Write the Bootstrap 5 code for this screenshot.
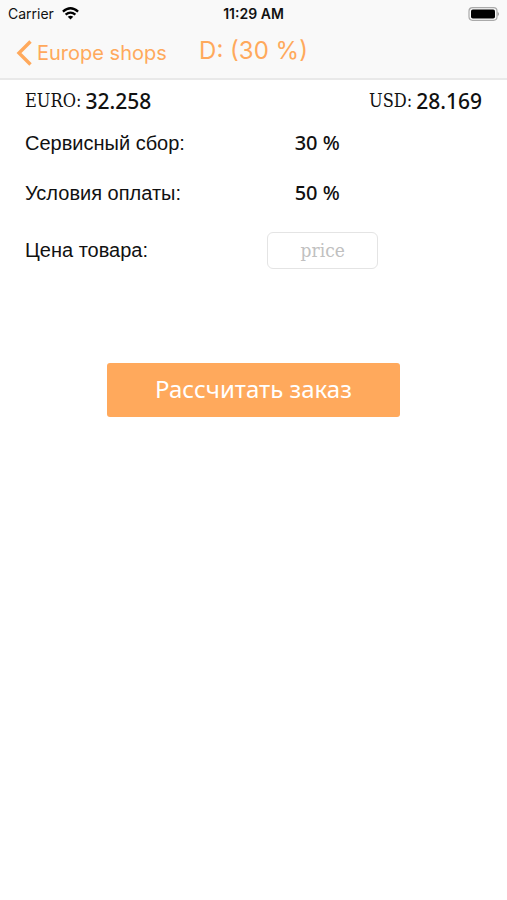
<!DOCTYPE html>
<html lang="ru">
<head>
<meta charset="utf-8">
<meta name="viewport" content="width=device-width, initial-scale=1">
<title>Europe shops</title>
<link rel="stylesheet" href="https://cdn.jsdelivr.net/npm/bootstrap@5.3.0/dist/css/bootstrap.min.css">
<style>
:root { --accent: #ffa95c; }
body { background: #fff; color: #111; font-family: "Liberation Sans", sans-serif; }
.top-area { background: #f9f9f9; border-bottom: 2px solid #e9e9e9; font-family: Inter, sans-serif; }
.three-part { display: grid; grid-template-columns: 1fr auto 1fr; align-items: center; }
.status-line { height: 27px; padding: 0 8px; font-size: 14px; line-height: 20px; }
.title-line { height: 51px; padding: 0 16px; }
.back-link { color: var(--accent); font-size: 20px; line-height: 24px; gap: 4px; }
.page-title { padding-bottom: 4px; color: var(--accent); font-size: 24px; line-height: 32px; }
.content-area { padding: 0 25px; }
.rate-line { height: 42px; gap: 4px; }
.rate-name { font-family: "DejaVu Serif Condensed", "DejaVu Serif", serif; font-size: 18px; line-height: 24px; }
.rate-value, .percent-value { font-family: "Noto Sans", sans-serif; font-weight: 500; line-height: 24px; }
.rate-value { font-size: 21px; }
.percent-value { width: 100px; font-size: 20px; text-align: center; }
.order-line { height: 50px; font-size: 20px; line-height: 24px; }
.first-line { height: 42px; }
.price-line { height: 64px; }
.line-label { flex: 0 0 53%; }
.price-input { width: 111px; height: 37px; padding: 0 8px; border: 1px solid #e4e4e4; border-radius: 6px; font-family: "DejaVu Serif Condensed", "DejaVu Serif", serif; font-size: 19px; }
.price-input::placeholder { color: #c0c0c0; opacity: 1; }
.submit-area { padding-top: 81px; }
.submit-btn { width: 64%; height: 54px; padding: 0 0 2px; border: 0; border-radius: 3px; background: var(--accent); color: #fff; font-family: "Noto Sans", sans-serif; font-size: 24px; line-height: 32px; }
.submit-btn:hover, .submit-btn:active { background: #f59b4b; color: #fff; }
</style>
</head>
<body>
<header class="top-area">
  <div class="status-line three-part">
    <div class="d-flex align-items-center gap-2">
      <span>Carrier</span>
      <svg width="17" height="13" viewBox="0 0 17 13" role="img" aria-label="Wi-Fi"><g fill="none" stroke="#000" stroke-width="2.3"><path d="M.9 4.7Q8.5-2.1 16.1 4.7"/><path d="M3.6 7.7Q8.5 3.5 13.4 7.7"/></g><path d="M5.7 9.7Q8.5 7.6 11.3 9.7L8.5 12.6Z"/></svg>
    </div>
    <span class="fw-semibold">11:29 AM</span>
    <svg class="ms-auto" width="31" height="14" viewBox="0 0 31 14" role="img" aria-label="Battery"><rect x="1" y=".7" width="28" height="12.6" rx="3.5" fill="#f9f9f9" stroke="#aaa" stroke-width="1.2"/><rect x="3" y="2.5" width="24" height="9" rx="1.8"/><path d="M29.6 4.8q1.4.7 1.4 2.2t-1.4 2.2z" fill="#999"/></svg>
  </div>
  <nav class="title-line three-part">
    <a class="back-link d-flex align-items-center text-decoration-none text-nowrap" href="#">
      <svg width="17" height="26" viewBox="0 0 17 26" aria-hidden="true"><path d="M14.500 1.500 3 13l11.500 11.500" fill="none" stroke="currentColor" stroke-width="3.4"/></svg>
      <span>Europe shops</span>
    </a>
    <h1 class="page-title fw-normal mb-0">D: (30 %)</h1>
  </nav>
</header>
<main class="content-area">
  <div class="d-flex justify-content-between">
    <div class="rate-line d-flex align-items-center"><span class="rate-name">EURO:</span><span class="rate-value">32.258</span></div>
    <div class="rate-line d-flex align-items-center"><span class="rate-name">USD:</span><span class="rate-value">28.169</span></div>
  </div>
  <form>
    <div class="order-line first-line d-flex align-items-center"><span class="line-label">Сервисный сбор:</span><span class="percent-value">30 %</span></div>
    <div class="order-line d-flex align-items-center mt-1"><span class="line-label">Условия оплаты:</span><span class="percent-value">50 %</span></div>
    <div class="order-line price-line d-flex align-items-center"><label class="line-label" for="price">Цена товара:</label><input class="price-input form-control text-center" id="price" type="text" inputmode="decimal" placeholder="price"></div>
    <div class="submit-area text-center"><button class="btn submit-btn" type="button">Рассчитать заказ</button></div>
  </form>
</main>
<script src="https://cdn.jsdelivr.net/npm/bootstrap@5.3.0/dist/js/bootstrap.bundle.min.js"></script>
</body>
</html>
